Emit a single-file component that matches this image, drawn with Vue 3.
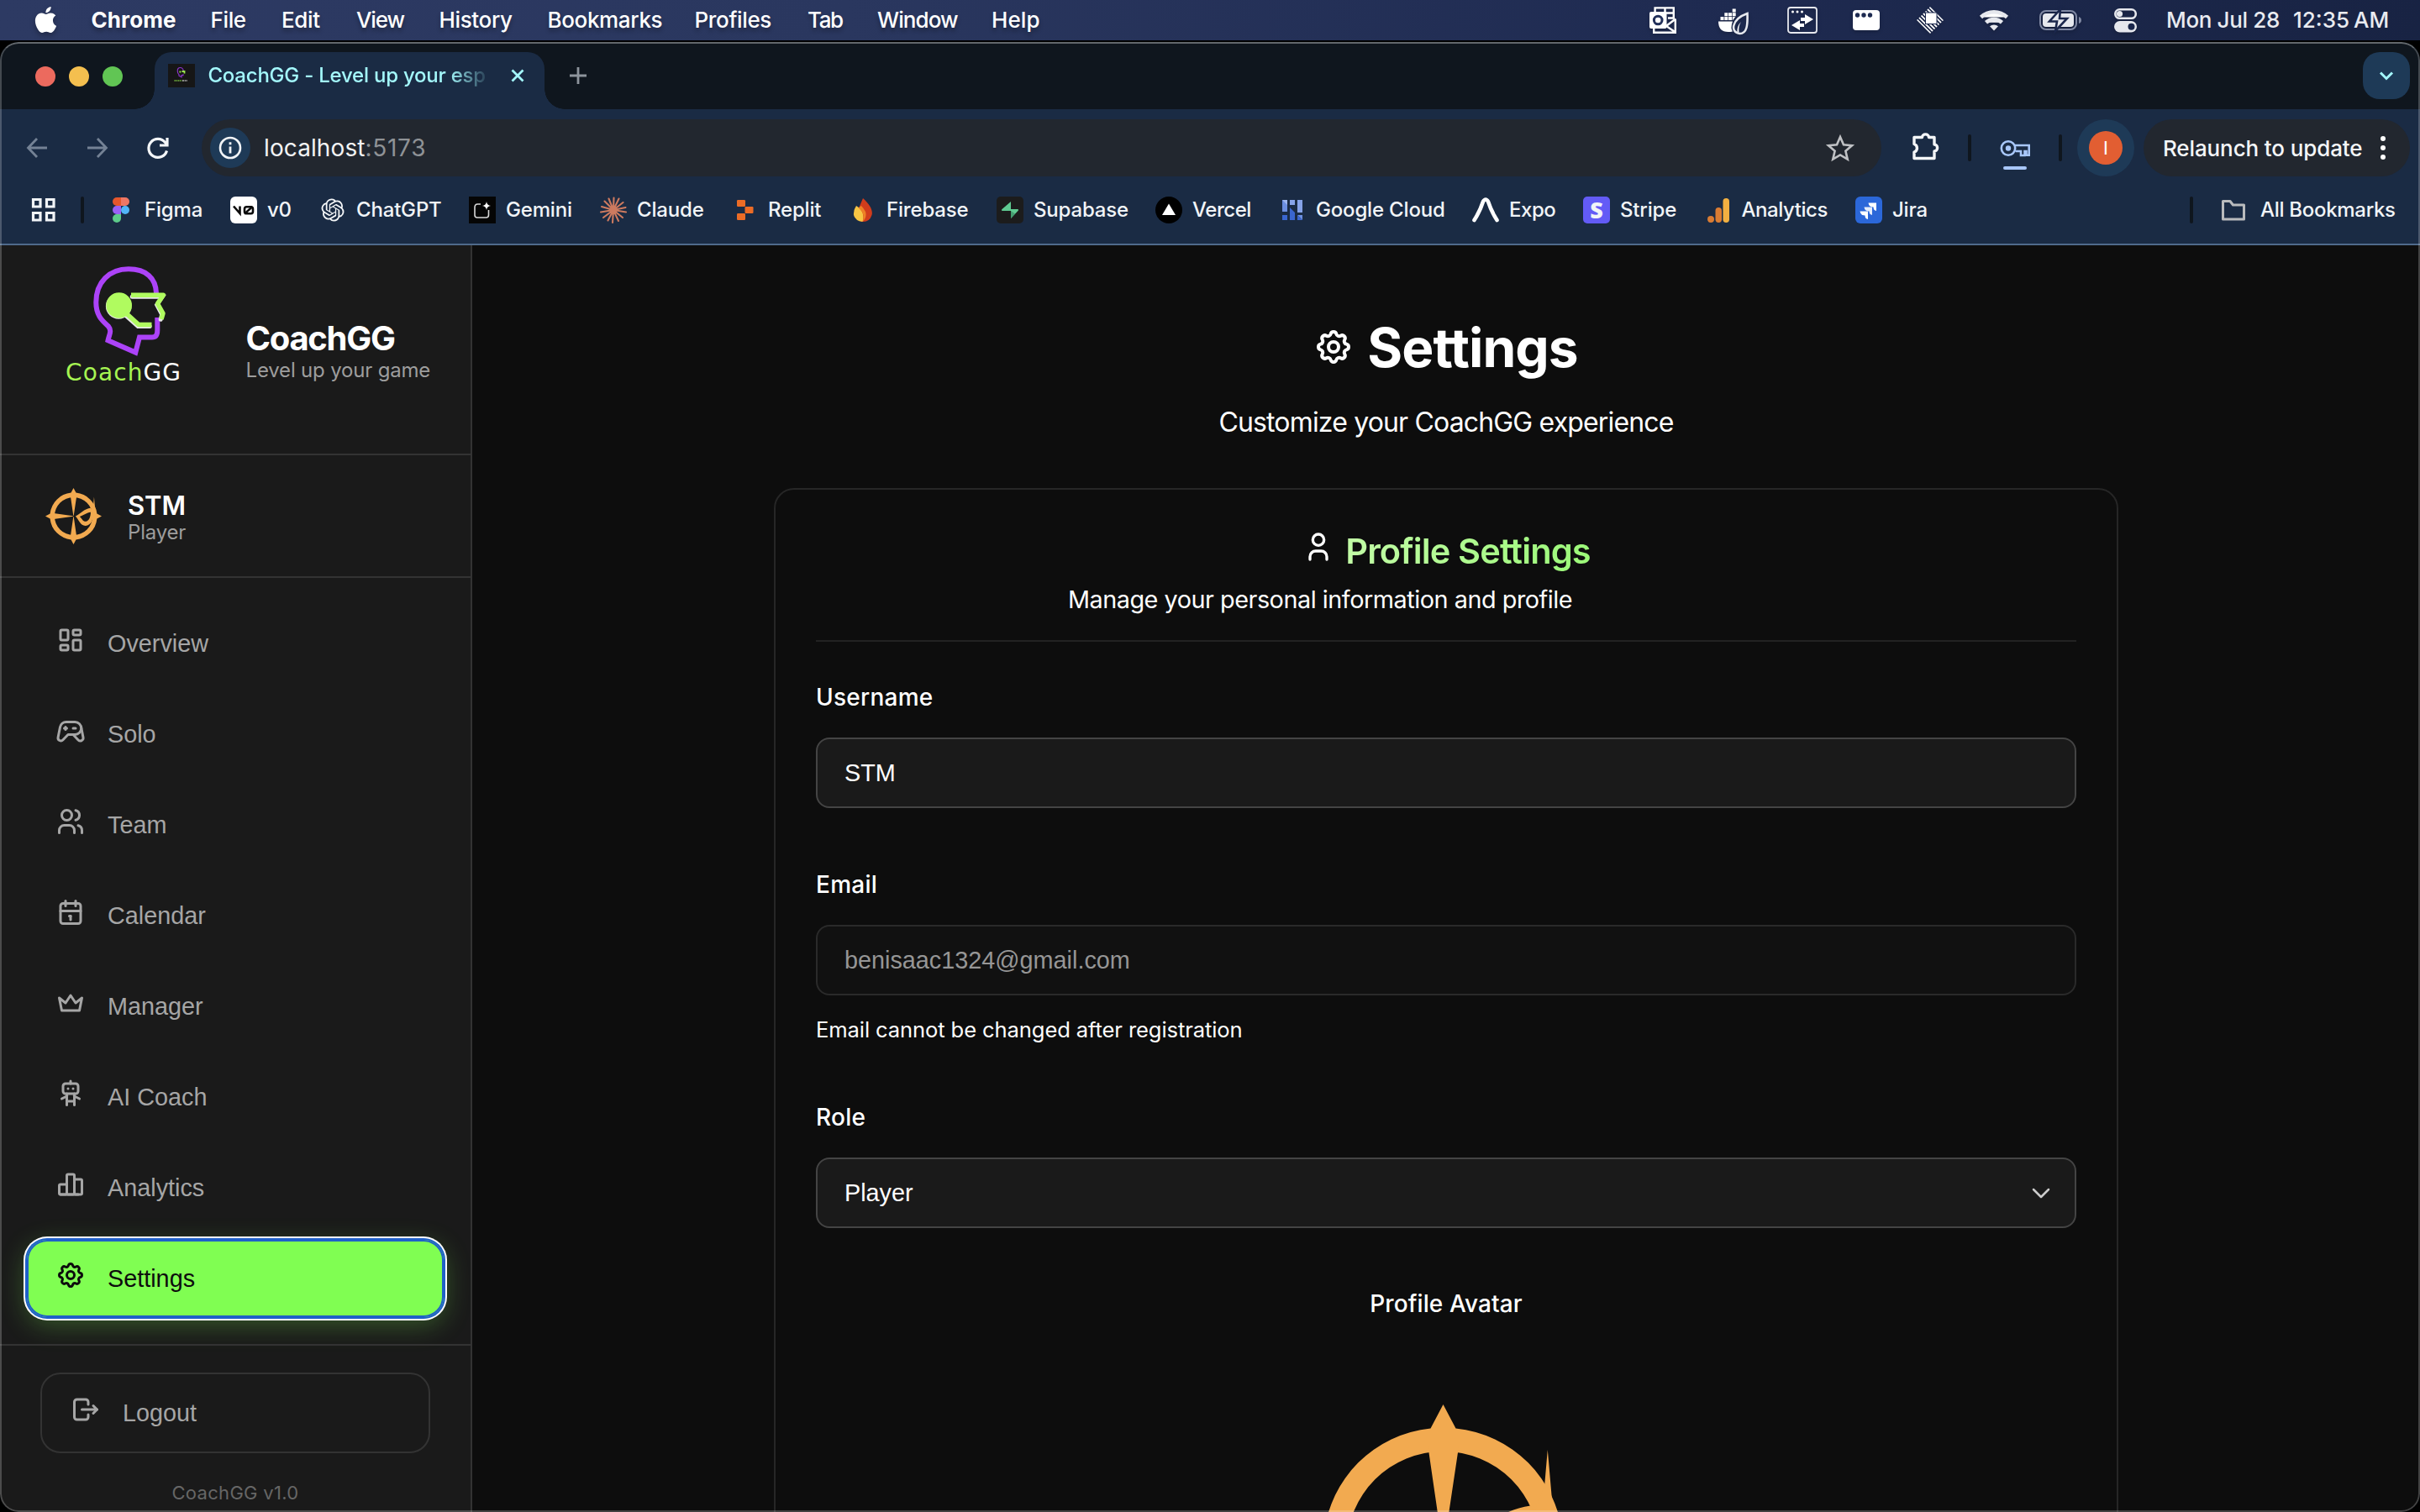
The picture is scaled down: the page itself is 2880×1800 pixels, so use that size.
<script setup>
const menus = ['Chrome', 'File', 'Edit', 'View', 'History', 'Bookmarks', 'Profiles', 'Tab', 'Window', 'Help']

const gear = [
  'M10.325 4.317c.426 -1.756 2.924 -1.756 3.35 0a1.724 1.724 0 0 0 2.573 1.066c1.543 -.94 3.31 .826 2.37 2.37a1.724 1.724 0 0 0 1.065 2.572c1.756 .426 1.756 2.924 0 3.35a1.724 1.724 0 0 0 -1.066 2.573c.94 1.543 -.826 3.31 -2.37 2.37a1.724 1.724 0 0 0 -2.572 1.065c-.426 1.756 -2.924 1.756 -3.35 0a1.724 1.724 0 0 0 -2.573 -1.066c-1.543 .94 -3.31 -.826 -2.37 -2.37a1.724 1.724 0 0 0 -1.065 -2.572c-1.756 -.426 -1.756 -2.924 0 -3.35a1.724 1.724 0 0 0 1.066 -2.573c-.94 -1.543 .826 -3.31 2.37 -2.37c1 .608 2.296 .07 2.572 -1.065z',
  'M9 12a3 3 0 1 0 6 0a3 3 0 0 0 -6 0',
]

const nav = [
  { label: 'Overview', paths: ['M5 4h4a1 1 0 0 1 1 1v6a1 1 0 0 1 -1 1h-4a1 1 0 0 1 -1 -1v-6a1 1 0 0 1 1 -1', 'M5 16h4a1 1 0 0 1 1 1v2a1 1 0 0 1 -1 1h-4a1 1 0 0 1 -1 -1v-2a1 1 0 0 1 1 -1', 'M15 12h4a1 1 0 0 1 1 1v6a1 1 0 0 1 -1 1h-4a1 1 0 0 1 -1 -1v-6a1 1 0 0 1 1 -1', 'M15 4h4a1 1 0 0 1 1 1v2a1 1 0 0 1 -1 1h-4a1 1 0 0 1 -1 -1v-2a1 1 0 0 1 1 -1'] },
  { label: 'Solo', paths: ['M12 5h3.5a5 5 0 0 1 0 10h-5.5l-4.015 4.227a2.3 2.3 0 0 1 -3.923 -2.035l1.634 -8.173a5 5 0 0 1 4.904 -4.019h3.4z', 'M14 15l4.07 4.284a2.3 2.3 0 0 0 3.925 -2.023l-1.6 -8.232', 'M8 9v2', 'M7 10h2', 'M14 10h2'] },
  { label: 'Team', paths: ['M5 7a4 4 0 1 0 8 0a4 4 0 0 0 -8 0', 'M3 21v-2a4 4 0 0 1 4 -4h4a4 4 0 0 1 4 4v2', 'M16 3.13a4 4 0 0 1 0 7.75', 'M21 21v-2a4 4 0 0 0 -3 -3.85'] },
  { label: 'Calendar', paths: ['M4 7a2 2 0 0 1 2 -2h12a2 2 0 0 1 2 2v12a2 2 0 0 1 -2 2h-12a2 2 0 0 1 -2 -2v-12z', 'M16 3v4', 'M8 3v4', 'M4 11h16', 'M11 15h1', 'M12 15v3'] },
  { label: 'Manager', paths: ['M12 6l4 6l5 -4l-2 10h-14l-2 -10l5 4z'] },
  { label: 'AI Coach', paths: ['M6 6a2 2 0 0 1 2 -2h8a2 2 0 0 1 2 2v4a2 2 0 0 1 -2 2h-8a2 2 0 0 1 -2 -2z', 'M12 2v2', 'M9 12v9', 'M15 12v9', 'M5 16l4 -2', 'M15 14l4 2', 'M9 18h6', 'M10 8v.01', 'M14 8v.01'] },
  { label: 'Analytics', paths: ['M3 13a1 1 0 0 1 1 -1h4a1 1 0 0 1 1 1v6a1 1 0 0 1 -1 1h-4a1 1 0 0 1 -1 -1z', 'M15 9a1 1 0 0 1 1 -1h4a1 1 0 0 1 1 1v10a1 1 0 0 1 -1 1h-4a1 1 0 0 1 -1 -1z', 'M9 5a1 1 0 0 1 1 -1h4a1 1 0 0 1 1 1v14a1 1 0 0 1 -1 1h-4a1 1 0 0 1 -1 -1z', 'M4 20h14'] },
  { label: 'Settings', paths: gear, active: true },
]

const logout = ['M14 8v-2a2 2 0 0 0 -2 -2h-7a2 2 0 0 0 -2 2v12a2 2 0 0 0 2 2h7a2 2 0 0 0 2 -2v-2', 'M9 12h12l-3 -3', 'M18 15l3 -3']

const compass = [
  'M0 -170.5L-15 -142A142 142 0 0 0 -142 -15L-170.5 0L-142 15A142 142 0 0 0 -15 142L0 170.5L15 142A142 142 0 0 0 142 15L170.5 0L142 -15A142 142 0 0 0 15 -142ZM0 -114.8A114.8 114.8 0 0 1 0 114.8A114.8 114.8 0 0 1 0 -114.8Z',
  'M-18 -120H18.5L1 -3H-1ZM-18 120H18L1 3H-1ZM-120 -18V18L-3 1V-1Z',
  'M124.3 -116.5L120.7 -75L108 -40L118 0L136 -20L129.5 -57Z',
  'M12 0C45 -18 65 -45 104 -50L116 -30C125 15 108 58 72 58C42 58 32 22 12 0ZM38 2C50 14 58 34 76 32C96 28 104 0 104 -24C80 -22 62 -4 38 2Z',
]
</script>

<template>
  <div class="desktop">
    <header class="menubar">
      <svg class="apple" viewBox="0 0 24 24"><path d="M12.152 6.896c-.948 0-2.415-1.078-3.96-1.04-2.04.027-3.91 1.183-4.961 3.014-2.117 3.675-.546 9.103 1.519 12.09 1.013 1.454 2.208 3.09 3.792 3.039 1.52-.065 2.09-.987 3.935-.987 1.831 0 2.35.987 3.96.948 1.637-.026 2.676-1.48 3.676-2.948 1.156-1.688 1.636-3.325 1.662-3.415-.039-.013-3.182-1.221-3.22-4.857-.026-3.04 2.48-4.494 2.597-4.559-1.429-2.09-3.623-2.324-4.39-2.376-2-.156-3.675 1.09-4.61 1.09zM15.53 3.83c.843-1.012 1.4-2.427 1.245-3.83-1.207.052-2.662.805-3.532 1.818-.78.896-1.454 2.338-1.273 3.714 1.338.104 2.715-.688 3.559-1.701" /></svg>
      <nav class="menus"><span v-for="m in menus" :key="m">{{ m }}</span></nav>
      <div class="status">
        <svg viewBox="0 0 36 36">
          <path d="M8.600 9V3.400h22.200V16M20.500 3.400V16M20 9.500h11M24 15.500h7M32.800 16.500v16.200H7.200V28M33 16.500l-11 8.500l11 7.500" fill="none" stroke="#fff" stroke-width="2.400" />
          <rect x="2" y="8" width="20.500" height="20" rx="2" />
          <circle cx="12.200" cy="18" r="4.800" fill="none" stroke="#22305a" stroke-width="3" />
        </svg>
        <svg viewBox="0 0 36 36" fill="#e6e8ee">
          <path d="M0 19.500h17q-3 8 0 12q-17 3-17-12z" />
          <path d="M2.500 14h4v4h-4zM7.300 14h4v4h-4zM12 14h4v4h-4zM16.700 14h3.500l-3 4h-.5zM7.300 9.300h4v4h-4zM12 9.300h4v4h-4zM16.700 9.300h4v4h-4zM16.700 4.500h4v4h-4z" />
          <path d="M34.500 10C35 24 34 34 25.500 34C14 33 15 17 34.500 10Z" fill="none" stroke="#e6e8ee" stroke-width="2.600" />
          <path d="M27 20q-5 5-4.500 12l2 .5q-1-7 2.500-12.500z" />
        </svg>
        <svg viewBox="0 0 36 36" fill="#e6e8ee">
          <rect x="1" y="3" width="34" height="30" rx="3" fill="none" stroke="#e6e8ee" stroke-width="1.800" />
          <circle cx="6.500" cy="8" r="1.500" /><circle cx="12" cy="8" r="1.500" /><circle cx="17.500" cy="8" r="1.500" />
          <path d="M31 17l-10-6v4h-5v4h5v4zM5 24l10-6v4h5v4h-5v4z" />
        </svg>
        <svg viewBox="0 0 36 36" fill="#e6e8ee">
          <rect x="2" y="6" width="32" height="24" rx="4" />
          <g fill="#1d2a50"><circle cx="7.500" cy="12" r="2.700" /><circle cx="15" cy="12" r="2.700" /><circle cx="22.500" cy="12" r="2.700" /></g>
        </svg>
        <svg viewBox="0 0 36 36">
          <clipPath id="diamond"><path d="M18 2L34 18L18 34L2 18Z" /></clipPath>
          <path clip-path="url(#diamond)" d="M0 15l20 20M0 10l30 30M0 5l30 30M4 4l30 30M5 0l30 30M10 0l30 30M15 0l25 25M20 0l20 20" fill="none" stroke="#fff" stroke-width="1.900" />
          <path d="M13 9.500h12.500v12.500H13z" stroke="#1d2a50" stroke-width="2" paint-order="stroke" />
        </svg>
        <svg viewBox="0 0 36 36" fill="none" stroke="#e6e8ee" stroke-width="4.600">
          <path d="M2.500 14.500a22.500 22.500 0 0 1 31 0" /><path d="M8.500 20.800a14 14 0 0 1 19 0" />
          <path d="M18 30.500l-5-5.200a7.500 7.500 0 0 1 10 0z" fill="#e6e8ee" stroke="none" />
        </svg>
        <svg class="battery" viewBox="0 0 54 36">
          <rect x="3" y="7" width="43" height="22" rx="7" fill="none" stroke="#7f88a3" stroke-width="2" />
          <path d="M49 14q3 1 3 4t-3 4z" fill="#7f88a3" />
          <rect x="6" y="10" width="37" height="16" rx="4" fill="#e6e8ee" />
          <path d="M27 5L14 19.500H23L21 31L35 16H26Z" fill="#e6e8ee" stroke="#1b274c" stroke-width="2.600" />
        </svg>
        <svg viewBox="0 0 36 36">
          <rect x="6.300" y="5.300" width="24.500" height="10.500" rx="5.250" fill="none" stroke="#e6e8ee" stroke-width="2.600" /><circle cx="11.500" cy="10.500" r="3.600" fill="#e6e8ee" />
          <rect x="5" y="19" width="27" height="13.500" rx="6.750" fill="#e6e8ee" /><circle cx="25.500" cy="25.700" r="4" fill="#1a264b" />
        </svg>
        <span>Mon Jul 28</span><span class="clock">12:35 AM</span>
      </div>
    </header>

    <div class="window">
      <div class="tabstrip">
        <div class="lights"><i class="red" /><i class="yellow" /><i class="green" /></div>
        <div class="tab">
          <div class="favicon">
            <svg viewBox="0 0 32 28"><path d="M18.500 9.500q-.5-5-4-5t-3.200 4.500q0 2.500 1.700 3.700v1.500l3 1.500v-2h2v-1.500" fill="none" stroke="#8a35c9" stroke-width="1.200" /><path d="M13.500 9.500h1.800M16.500 9h3v2.500" fill="none" stroke="#9be54e" stroke-width="1.800" /><path d="M7.500 20h9" stroke="#5f9136" stroke-width="1.800" stroke-dasharray="1.500 .6" /><path d="M17 20h6" stroke="#888" stroke-width="1.800" stroke-dasharray="2 .6" /></svg>
          </div>
          <span class="tab-title">CoachGG - Level up your esp</span>
          <svg class="close" viewBox="0 0 16 16"><path d="M1.500 1.500l13 13M14.500 1.500l-13 13" /></svg>
        </div>
        <svg class="plus" viewBox="0 0 20 20"><path d="M10 0v20M0 10h20" /></svg>
        <div class="tab-search"><svg viewBox="0 0 20 20"><path d="M3 6.500l7 7l7-7" /></svg></div>
      </div>

      <div class="toolbar">
        <svg class="tool back" viewBox="0 0 32 32"><path d="M28 16H6M16 5L5.500 16L16 27" /></svg>
        <svg class="tool fwd" viewBox="0 0 32 32"><path d="M4 16h22M16 5l10.500 11L16 27" /></svg>
        <svg class="tool reload" viewBox="0 0 32 32"><path d="M26.500 19.500A11 11 0 1 1 24.500 9.500L26.500 12M27 4v9h-9" /></svg>
        <div class="omnibox">
          <div class="info"><svg viewBox="0 0 28 28"><circle cx="14" cy="14" r="12" fill="none" stroke="#f1f4f7" stroke-width="2.600" /><path d="M14 12.500v8M14 7.300v2.900" stroke="#f1f4f7" stroke-width="2.800" /></svg></div>
          <span class="host">localhost</span><span class="port">:5173</span>
          <svg class="star" viewBox="0 0 36 36"><path d="M18 5l4 9.300l10 .9l-7.600 6.600l2.300 9.800L18 26.400l-8.700 5.200l2.300-9.800L4 15.200l10-.9z" /></svg>
        </div>
        <svg class="puzzle" viewBox="0 0 40 40"><path d="M7 9.500h8.500a4 3.600 0 0 1 8 0H30v8.500a3.600 4 0 0 1 0 8V34.500H6V27a5 5 0 0 0 0-9.500V9.500z" /></svg>
        <i class="sep s1" />
        <svg class="key" viewBox="0 0 36 68"><circle cx="10" cy="34.500" r="8.200" fill="none" stroke="#a8c7fa" stroke-width="2.600" /><circle cx="10" cy="34.500" r="3.200" /><path d="M17.500 31H34.700V38.500M18.500 38h6.500v5h4.500v-5h2v4.700h3.200V36" fill="none" stroke="#a8c7fa" stroke-width="2.600" /><rect x="4" y="56" width="28" height="4" rx="2" /></svg>
        <i class="sep s2" />
        <div class="profile"><b>I</b></div>
        <div class="relaunch"><span>Relaunch to update</span><i class="dots" /></div>
      </div>

      <div class="bookmarks">
        <svg class="apps" viewBox="0 0 30 30"><path d="M2.500 2.500h8.500v8.500H2.500zM18.500 2.500H27v8.500h-8.500zM2.500 18.500h8.500V27H2.500zM18.500 18.500H27V27h-8.500z" /></svg>
        <i class="sep s3" />
        <div class="marks">
          <div class="bm"><svg viewBox="0 0 32 32"><path d="M16 1h-5a5 5 0 0 0 0 10h5z" fill="#e5572d" /><path d="M16 1h5a5 5 0 0 1 0 10h-5z" fill="#ee7764" /><path d="M16 11h-5a5 5 0 0 0 0 10h5z" fill="#9a60f5" /><circle cx="21" cy="16" r="5" fill="#52b5f8" /><path d="M16 21h-5a5 5 0 1 0 5 5z" fill="#5dcb8a" /></svg><span>Figma</span></div>
          <div class="bm"><svg viewBox="0 0 32 32"><rect width="32" height="32" rx="6" fill="#fff" /><path d="M4 11.500l7.500 8.500V11.500" fill="none" stroke="#0a0a0a" stroke-width="2.600" /><rect x="17" y="12.300" width="10" height="8" rx="2.500" fill="none" stroke="#0a0a0a" stroke-width="2.600" /><path d="M17 20.500l9.500-8.500" stroke="#0a0a0a" stroke-width="2.400" /></svg><span>v0</span></div>
          <div class="bm"><svg viewBox="-2.200 -2.200 28.400 28.400"><path fill="#f4f6f8" d="M22.2819 9.8211a5.9847 5.9847 0 0 0-.5157-4.9108 6.0462 6.0462 0 0 0-6.5098-2.9A6.0651 6.0651 0 0 0 4.9807 4.1818a5.9847 5.9847 0 0 0-3.9977 2.9 6.0462 6.0462 0 0 0 .7427 7.0966 5.98 5.98 0 0 0 .511 4.9107 6.051 6.051 0 0 0 6.5146 2.9001A5.9847 5.9847 0 0 0 13.2599 24a6.0557 6.0557 0 0 0 5.7718-4.2058 5.9894 5.9894 0 0 0 3.9977-2.9001 6.0557 6.0557 0 0 0-.7475-7.0729zm-9.022 12.6081a4.4755 4.4755 0 0 1-2.8764-1.0408l.1419-.0804 4.7783-2.7582a.7948.7948 0 0 0 .3927-.6813v-6.7369l2.02 1.1686a.071.071 0 0 1 .038.052v5.5826a4.504 4.504 0 0 1-4.4945 4.4944zm-9.6607-4.1254a4.4708 4.4708 0 0 1-.5346-3.0137l.142.0852 4.783 2.7582a.7712.7712 0 0 0 .7806 0l5.8428-3.3685v2.3324a.0804.0804 0 0 1-.0332.0615L9.74 19.9502a4.4992 4.4992 0 0 1-6.1408-1.6464zM2.3408 7.8956a4.485 4.485 0 0 1 2.3655-1.9728V11.6a.7664.7664 0 0 0 .3879.6765l5.8144 3.3543-2.0201 1.1685a.0757.0757 0 0 1-.071 0l-4.8303-2.7865A4.504 4.504 0 0 1 2.3408 7.872zm16.5963 3.8558L13.1038 8.364 15.1192 7.2a.0757.0757 0 0 1 .071 0l4.8303 2.7913a4.4944 4.4944 0 0 1-.6765 8.1042v-5.6772a.79.79 0 0 0-.407-.667zm2.0107-3.0231l-.142-.0852-4.7735-2.7818a.7759.7759 0 0 0-.7854 0L9.409 9.2297V6.8974a.0662.0662 0 0 1 .0284-.0615l4.8303-2.7866a4.4992 4.4992 0 0 1 6.6802 4.66zM8.3065 12.863l-2.02-1.1638a.0804.0804 0 0 1-.038-.0567V6.0742a4.4992 4.4992 0 0 1 7.3757-3.4537l-.142.0805L8.704 5.459a.7948.7948 0 0 0-.3927.6813zm1.0976-2.3654l2.602-1.4998 2.6069 1.4998v2.9994l-2.5974 1.4997-2.6067-1.4997Z" /></svg><span>ChatGPT</span></div>
          <div class="bm"><svg viewBox="0 0 32 32"><rect width="32" height="32" fill="#050505" /><path d="M14 9h-3.500q-3.500 0-3.500 4v9q0 3 3 3h10.500q3 0 3-3v-6" fill="none" stroke="#d8d8d8" stroke-width="1.600" /><path d="M21 6q.6 4.600 5 5q-4.400.6-5 5q-.6-4.400-5-5q4.400-.6 5-5z" fill="#fff" /></svg><span>Gemini</span></div>
          <div class="bm"><svg viewBox="0 0 32 32"><path d="M16 16L16.500 1.500M16 16L22.500 2.500M16 16L27.500 7M16 16L30.500 13M16 16L31 18.500M16 16L27 25M16 16L22 29M16 16L15 31M16 16L9.500 28.500M16 16L4 25M16 16L1 18.500M16 16L2 12M16 16L5.500 5.500M16 16L10.500 2.500" fill="none" stroke="#cd7a5f" stroke-width="2.100" stroke-linecap="round" /></svg><span>Claude</span></div>
          <div class="bm"><svg viewBox="0 0 32 32"><g fill="#ec6c26"><rect x="7" y="4" width="10" height="8" rx="1.200" /><rect x="16.500" y="12" width="10" height="8" rx="1.200" /><rect x="7" y="20" width="10" height="8" rx="1.200" /></g></svg><span>Replit</span></div>
          <div class="bm"><svg viewBox="0 0 32 32"><path d="M16 2C25 10 28 17 26.500 22Q24 30 16 30Q9 29 7 23Q11 14 16 2Z" fill="#d13c1c" /><path d="M8 11C17 17 17.500 24 15.500 30Q7 29 5 22Q4.500 16 8 11Z" fill="#f7c544" /><path d="M10.500 13.500C17 18 18 25 15.500 30Q21 25 19 18Q16 13 14 11Z" fill="#ee8126" /></svg><span>Firebase</span></div>
          <div class="bm"><svg viewBox="0 0 32 32"><rect width="32" height="32" rx="5" fill="#1c1c1c" /><path d="M17 6v9h8.500q1 .8 0 2L17 26V17H6.500q-1-.8 0-2z" fill="#5fcb92" /><path d="M17 17v9l5-5.500z" fill="#459d70" /></svg><span>Supabase</span></div>
          <div class="bm"><svg viewBox="0 0 32 32"><circle cx="16" cy="16" r="16" fill="#000" /><path d="M16 8.500l8 13.500H8z" fill="#fff" /></svg><span>Vercel</span></div>
          <div class="bm"><svg viewBox="0 0 32 32"><path d="M4 4h6v14H4z" fill="#6c8fe0" /><path d="M4 4h6v6z" fill="#9db5ee" /><path d="M13 4h6v6h-6zM22 4h6v15h-6z" fill="#86a3e8" /><path d="M13 13l6 6v9h-6zM4 22h6v6H4z" fill="#3a66cf" /><path d="M22 22h6v6z" fill="#6c8fe0" /><path d="M22 22v6h6z" fill="#3a66cf" /></svg><span>Google Cloud</span></div>
          <div class="bm"><svg viewBox="0 0 32 32"><path d="M2.500 28Q9 18 13 6Q16 1 19 6Q23 18 29.500 28" fill="none" stroke="#fff" stroke-width="4.600" stroke-linecap="round" stroke-linejoin="round" /></svg><span>Expo</span></div>
          <div class="bm"><i class="stripe">S</i><span>Stripe</span></div>
          <div class="bm"><svg viewBox="0 0 32 32"><circle cx="7" cy="27" r="4" fill="#da7c33" /><rect x="12.500" y="13" width="7.500" height="18" rx="3.700" fill="#da7c33" /><rect x="21.500" y="2" width="7.500" height="29" rx="3.700" fill="#f2b041" /></svg><span>Analytics</span></div>
          <div class="bm"><svg viewBox="0 0 32 32"><rect width="32" height="32" rx="6" fill="#2b67d9" /><path d="M15.500 7.500H25V17q-3.500-.5-3.500-4.500q-5.500 0-6-5z" fill="#fff" /><path d="M10.500 12.500H20V22q-3.500-.5-3.500-4.500q-5.500 0-6-5z" fill="#e4ecfb" /><path d="M5.500 17.500H15V27q-3.500-.5-3.500-4.500q-5.500 0-6-5z" fill="#fff" /></svg><span>Jira</span></div>
        </div>
        <i class="sep s4" />
        <svg class="folder" viewBox="0 0 32 28"><path d="M3.500 3.500h8.500l3.500 4.500h13v17h-25z" /></svg>
        <span class="all">All Bookmarks</span>
      </div>

      <div class="page">
        <aside class="sidebar">
          <div class="brand">
            <svg class="logo" viewBox="70 300 150 160">
              <path d="M186 349C185.500 331 174 320.300 153 320.300C130 320.300 114.300 336 114.300 360C114.300 376 122 382 129 388.500C133.500 394 130 398 128.500 405.300L161.300 419.500L166 401.500H181C186 401.500 187.300 398 187.300 393V378" fill="none" stroke="#ac43f8" stroke-width="6" />
              <path d="M158 352H194L187.500 361.500L193.500 373L192 379M148 372L165 387.300H179" fill="none" stroke="#e8e8e8" stroke-width="5" stroke-linecap="round" transform="translate(-.8 1.300)" />
              <circle cx="141.200" cy="364.500" r="15.300" fill="#e8e8e8" />
              <g fill="none" stroke="#b0fb5f" stroke-width="5.500" stroke-linejoin="round">
                <path d="M156 351.300H194.300L187.500 361.500L194 373L192 380" /><path d="M148 371L165 386.500H180.500" />
              </g>
              <circle cx="141.700" cy="363.500" r="15.300" fill="#b0fb5f" />
              <text x="78" y="453" textLength="137" class="logo-text"><tspan fill="#a6f552">Coach</tspan><tspan fill="#fff">GG</tspan></text>
            </svg>
            <div class="brand-text"><strong>CoachGG</strong><span>Level up your game</span></div>
          </div>
          <div class="user">
            <svg class="avatar-small" viewBox="-170.500 -170.500 341 341" fill="#f2aa50" fill-rule="evenodd"><path v-for="p in compass" :key="p" :d="p" /></svg>
            <div class="user-text"><strong>STM</strong><span>Player</span></div>
          </div>
          <nav class="nav">
            <a v-for="n in nav" :key="n.label" :class="{ active: n.active }">
              <svg class="line" viewBox="0 0 24 24"><path v-for="p in n.paths" :key="p" :d="p" /></svg>{{ n.label }}
            </a>
          </nav>
          <div class="foot">
            <a class="logout"><svg class="line" viewBox="0 0 24 24"><path v-for="p in logout" :key="p" :d="p" /></svg>Logout</a>
            <span class="version">CoachGG v1.0</span>
          </div>
        </aside>

        <main class="main">
          <h1><svg class="line" viewBox="0 0 24 24"><path v-for="p in gear" :key="p" :d="p" /></svg><span>Settings</span></h1>
          <p class="sub">Customize your CoachGG experience</p>
          <section class="card">
            <h2><svg class="line" viewBox="0 0 24 24"><path d="M8 7a4 4 0 1 0 8 0a4 4 0 0 0 -8 0" /><path d="M6 21v-2a4 4 0 0 1 4 -4h4a4 4 0 0 1 4 4v2" /></svg><span>Profile Settings</span></h2>
            <p class="desc">Manage your personal information and profile</p>
            <div class="rule" />
            <label class="first">Username</label>
            <div class="field">STM</div>
            <label class="second">Email</label>
            <div class="field disabled">benisaac1324@gmail.com</div>
            <p class="hint">Email cannot be changed after registration</p>
            <label class="third">Role</label>
            <div class="field select">Player<svg viewBox="0 0 24 24"><path d="M3 8l9 9l9-9" /></svg></div>
            <label class="avatar-label">Profile Avatar</label>
            <svg class="avatar" viewBox="-166.500 -170.500 341 341" fill="#f2aa50" fill-rule="evenodd"><path v-for="p in compass" :key="p" :d="p" /></svg>
          </section>
        </main>
      </div>
    </div>
  </div>
</template>

<style>
html, body { margin: 0; background: #000; overflow: hidden; }
</style>

<style scoped>
* { box-sizing: border-box; margin: 0; padding: 0; }
i { font-style: normal; }
svg { display: block; flex: none; }
.desktop { width: 2880px; height: 1800px; overflow: hidden; display: flex; flex-direction: column; background: #000; font-family: Inter, "Noto Sans", sans-serif; color: #fff; }

.menubar { height: 48px; flex: none; display: flex; align-items: center; background: linear-gradient(95deg, #2d3a63 0%, #2a375f 35%, #1e2a50 72%, #182343 100%); font-size: 26px; font-weight: 500; line-height: 46px; white-space: nowrap; letter-spacing: -.35px; }
.apple { width: 31px; height: 31px; margin: -2px 0 0 38.500px; fill: #fff; filter: drop-shadow(0 3px 3px rgba(0, 0, 0, .3)); }
.menus { margin-left: 39px; width: 1852.500px; flex: none; display: grid; grid-template-columns: 142px 84.500px 89px 98.500px 129px 175px 134.500px 83px 136px 80px; text-shadow: 0 4px 5px rgba(0, 0, 0, .3); }
.menus span:first-child { font-weight: 700; letter-spacing: .1px; }
.menus span:nth-child(4) { letter-spacing: -1.100px; }
.menus span:nth-child(8) { letter-spacing: -1.400px; }
.menus span:nth-child(9) { letter-spacing: -.9px; }
.menus span:nth-child(10) { letter-spacing: .1px; }
.status { display: grid; align-items: center; grid-template-columns: 84px 82px 76px 76px 76px 70px 86px 67px 151px 120px; color: #e9ebf0; }
.status svg { width: 36px; height: 36px; fill: #fff; filter: drop-shadow(0 2px 2px rgba(0, 0, 0, .2)); }
.status svg.battery { width: 54px; }
.status .clock { letter-spacing: 0; word-spacing: -2px; }

.window { position: relative; flex: none; height: 1750px; margin-top: 2px; border-radius: 22px; overflow: hidden; display: flex; flex-direction: column; background: #0f161e; }
.window::after { content: ""; position: absolute; inset: 0; border: 2px solid rgba(255, 255, 255, .22); border-top-color: rgba(255, 255, 255, .35); border-radius: 22px; }

.tabstrip { height: 80px; flex: none; display: flex; align-items: flex-start; background: #0f161e; }
.lights { display: flex; gap: 16px; margin: 29px 0 0 42px; }
.lights i { width: 24px; height: 24px; border-radius: 50%; }
.red { background: #ec6a5e; }
.yellow { background: #f4bf4f; }
.green { background: #61c554; }
.tab { position: relative; margin: 12px 0 0 38px; width: 464px; height: 68px; border-radius: 20px 20px 0 0; background: #1a2b44; display: flex; align-items: center; padding: 0 0 12px 16px; }
.tab::before, .tab::after { content: ""; position: absolute; bottom: 0; width: 24px; height: 24px; }
.tab::before { left: -24px; background: radial-gradient(circle at 0 0, transparent 23.500px, #1a2b44 24px); }
.tab::after { right: -24px; background: radial-gradient(circle at 100% 0, transparent 23.500px, #1a2b44 24px); }
.favicon { width: 32px; height: 28px; background: #161616; }
.tab-title { width: 344px; margin-left: 15.500px; white-space: nowrap; font-size: 24px; font-weight: 500; letter-spacing: -.23px; line-height: 34px; color: #a3f7fb; -webkit-mask-image: linear-gradient(90deg, #000 286px, transparent 336px); mask-image: linear-gradient(90deg, #000 286px, transparent 336px); }
.close { width: 16px; height: 16px; margin-left: 16px; fill: none; stroke: #a3f7fb; stroke-width: 2.800; }
.plus { width: 20px; height: 20px; margin: 30px 0 0 30px; fill: none; stroke: #8d949c; stroke-width: 2.800; }
.tab-search { width: 56px; height: 56px; margin: 12px 12px 0 auto; border-radius: 20px; background: #1e3a57; display: flex; align-items: center; justify-content: center; }
.tab-search svg { width: 20px; height: 20px; fill: none; stroke: #a3f7fb; stroke-width: 3; }

.toolbar { height: 92px; flex: none; display: flex; align-items: center; background: #1a2b44; }
.tool { width: 32px; height: 32px; fill: none; stroke: #748295; stroke-width: 2.800; }
.back { margin-left: 28px; }
.fwd { margin-left: 40px; }
.reload { margin-left: 40px; stroke: #f4f6f8; stroke-width: 3.200; }
.omnibox { width: 1999px; height: 68px; margin-left: 36px; border-radius: 34px; background: #22272f; display: flex; align-items: center; padding: 0 31px 0 10px; font-size: 28px; line-height: 40px; }
.info { width: 48px; height: 48px; margin-right: 16px; border-radius: 50%; background: #1e3a57; display: flex; align-items: center; justify-content: center; }
.info svg { width: 28px; height: 28px; }
.host { color: #f2f3f4; letter-spacing: .1px; }
.port { color: #8f9296; letter-spacing: .7px; }
.star { width: 36px; height: 36px; margin-left: auto; fill: none; stroke: #bfc1c4; stroke-width: 2.600; }
.puzzle { width: 40px; height: 40px; margin: -4px 0 0 33px; fill: none; stroke: #f4f6f8; stroke-width: 3.400; stroke-linejoin: round; }
.sep { width: 4px; height: 32px; flex: none; border-radius: 2px; background: #0f161e; }
.s1 { margin-left: 30px; }
.key { width: 36px; height: 68px; margin-left: 34px; fill: #a8c7fa; }
.s2 { margin-left: 34px; }
.profile { width: 68px; height: 68px; margin-left: 18px; border-radius: 50%; background: #1e3a57; display: flex; align-items: center; justify-content: center; }
.profile b { width: 40px; height: 40px; border-radius: 50%; background: #e25e32; font-size: 22px; font-weight: 400; line-height: 40px; text-align: center; }
.relaunch { width: 317px; height: 68px; margin-left: 11px; border-radius: 34px; background: #22272f; display: flex; align-items: center; padding-left: 23px; font-size: 26px; font-weight: 500; letter-spacing: -.12px; white-space: nowrap; color: #f4f6f8; }
.relaunch span { width: 259px; }
.dots { width: 6px; height: 6px; border-radius: 50%; background: #fff; box-shadow: 0 -11px #fff, 0 11px #fff; }

.bookmarks { height: 70px; flex: none; display: flex; align-items: center; padding-bottom: 12px; background: #1a2b44; border-bottom: 2px solid #4f6a8b; font-size: 24px; font-weight: 500; line-height: 34px; letter-spacing: -.18px; color: #f1f4f7; white-space: nowrap; }
.apps { width: 30px; height: 30px; margin-left: 37px; fill: none; stroke: #f1f4f7; stroke-width: 3.200; }
.s3 { margin-left: 29px; }
.marks { width: 2478px; margin-left: 28px; flex: none; display: grid; grid-template-columns: 146px 106px 178px 156px 156px 141px 175px 189px 147px 230px 132px 144.500px 179.500px 100px; }
.bm { display: flex; align-items: center; gap: 12px; }
.bm svg { width: 32px; height: 32px; }
.bm:nth-child(9), .bm:nth-child(11), .bm:nth-child(13) { letter-spacing: -.45px; }
.stripe { width: 32px; height: 32px; border-radius: 5px; background: #635bf6; font: 800 27px/32px "Open Sans", sans-serif; text-align: center; letter-spacing: 0; }
.folder { width: 32px; height: 28px; margin-left: 32px; fill: none; stroke: #b9bbbd; stroke-width: 3; stroke-linejoin: round; }
.all { margin-left: 16px; letter-spacing: -.3px; }

.page { flex: 1; min-height: 0; display: flex; background: #0d0d0d; }
.sidebar { width: 562px; flex: none; display: flex; flex-direction: column; background: #1a1a1a; border-right: 2px solid #333; }
.brand { height: 250px; flex: none; display: flex; align-items: flex-start; border-bottom: 2px solid #333; }
.logo { width: 150px; height: 160px; margin: 8px 0 0 70px; }
.logo-text { font-family: "DejaVu Sans", sans-serif; font-size: 28px; }
.brand-text { display: flex; flex-direction: column; margin: 87px 0 0 72.500px; }
.brand-text strong { font-size: 40px; line-height: 48px; letter-spacing: -1.300px; }
.brand-text span { font-size: 24px; line-height: 28px; letter-spacing: -.18px; color: #9d9d9d; white-space: nowrap; }
.user { height: 146px; flex: none; display: flex; align-items: flex-start; border-bottom: 2px solid #333; }
.avatar-small { width: 67px; height: 67px; margin: 39px 0 0 54px; }
.user-text { display: flex; flex-direction: column; margin: 42px 0 0 31px; }
.user-text strong { font-size: 31px; font-weight: 600; line-height: 35px; letter-spacing: -.1px; }
.user-text span { font-size: 24px; line-height: 30px; letter-spacing: -.2px; color: #9d9d9d; }
.line { fill: none; stroke: currentColor; stroke-width: 2; stroke-linecap: round; stroke-linejoin: round; }
.nav { height: 912px; flex: none; display: flex; flex-direction: column; gap: 16px; padding: 32px; }
.nav a { height: 92px; flex: none; display: flex; align-items: center; gap: 26px; padding-left: 34px; border-radius: 24px; color: #a6a6a6; font: 28.800px/40px "Liberation Sans", Arial, sans-serif; }
.nav .line, .logout .line { width: 36px; height: 36px; margin-bottom: 8px; }
.nav a.active { background: #80fe52; color: #0d0d0d; box-shadow: inset 0 0 0 2px #1f60c8, 0 0 0 2px #1f60c8, 0 0 0 4px #fff, 0 8px 32px rgba(128, 254, 82, .3); }
.foot { flex: 1; border-top: 2px solid #333; display: flex; flex-direction: column; padding: 32px 48px 0; }
.logout { height: 96px; flex: none; display: flex; align-items: center; gap: 26px; padding-left: 34px; border: 2px solid #333; border-radius: 24px; color: #a6a6a6; font: 28.800px/40px "Liberation Sans", Arial, sans-serif; }
.version { margin-top: 32px; font-size: 22px; line-height: 30px; letter-spacing: .3px; text-align: center; color: #666; }

.main { flex: 1; overflow: hidden; display: flex; flex-direction: column; align-items: center; padding-top: 82px; }
h1 { display: flex; align-items: center; gap: 16px; height: 80px; flex: none; font-size: 64px; font-weight: 700; line-height: 80px; letter-spacing: -.97px; }
h1 .line { width: 48px; height: 48px; margin: 0 0 2px -1px; }
.sub { margin-top: 25px; font-size: 32px; line-height: 48px; letter-spacing: -.84px; }
.card { width: 1600px; height: 1600px; flex: none; margin-top: 54px; border: 2px solid #262626; border-radius: 24px; padding: 48px 48px 0; display: flex; flex-direction: column; }
h2 { display: flex; justify-content: center; align-items: center; gap: 12px; height: 50px; font-size: 41.600px; font-weight: 600; line-height: 50px; letter-spacing: -.9px; }
h2 .line { width: 40px; height: 40px; margin-bottom: 10px; }
h2 span { background: linear-gradient(90deg, #c2fca6, #9bf878); background-clip: text; -webkit-background-clip: text; color: transparent; }
.desc { width: 1200px; margin-top: 13px; text-align: center; font-size: 28.800px; line-height: 40px; letter-spacing: -.47px; }
.rule { height: 2px; flex: none; margin-top: 28px; background: #222; }
label { font-size: 28px; font-weight: 500; line-height: 40px; letter-spacing: .25px; }
.first { margin-top: 46px; }
.second { margin-top: 71px; }
.third { margin-top: 66px; }
.field { height: 84px; flex: none; margin-top: 28px; display: flex; align-items: center; padding: 0 28px 0 32px; border: 2px solid #444; border-radius: 16px; background: #1a1a1a; font: 28.800px/40px "Liberation Sans", Arial, sans-serif; }
.field.disabled { border-color: #2a2a2a; background: #111; color: #969696; }
.select { justify-content: space-between; }
.select svg { width: 24px; height: 24px; fill: none; stroke: #ccc; stroke-width: 2.500; stroke-linecap: round; stroke-linejoin: round; }
.hint { margin-top: 23px; font-size: 25.600px; line-height: 36px; letter-spacing: -.12px; }
.avatar-label { margin-top: 70px; text-align: center; letter-spacing: .1px; }
.avatar { width: 341px; height: 341px; margin: 100px auto 0; }
</style>
